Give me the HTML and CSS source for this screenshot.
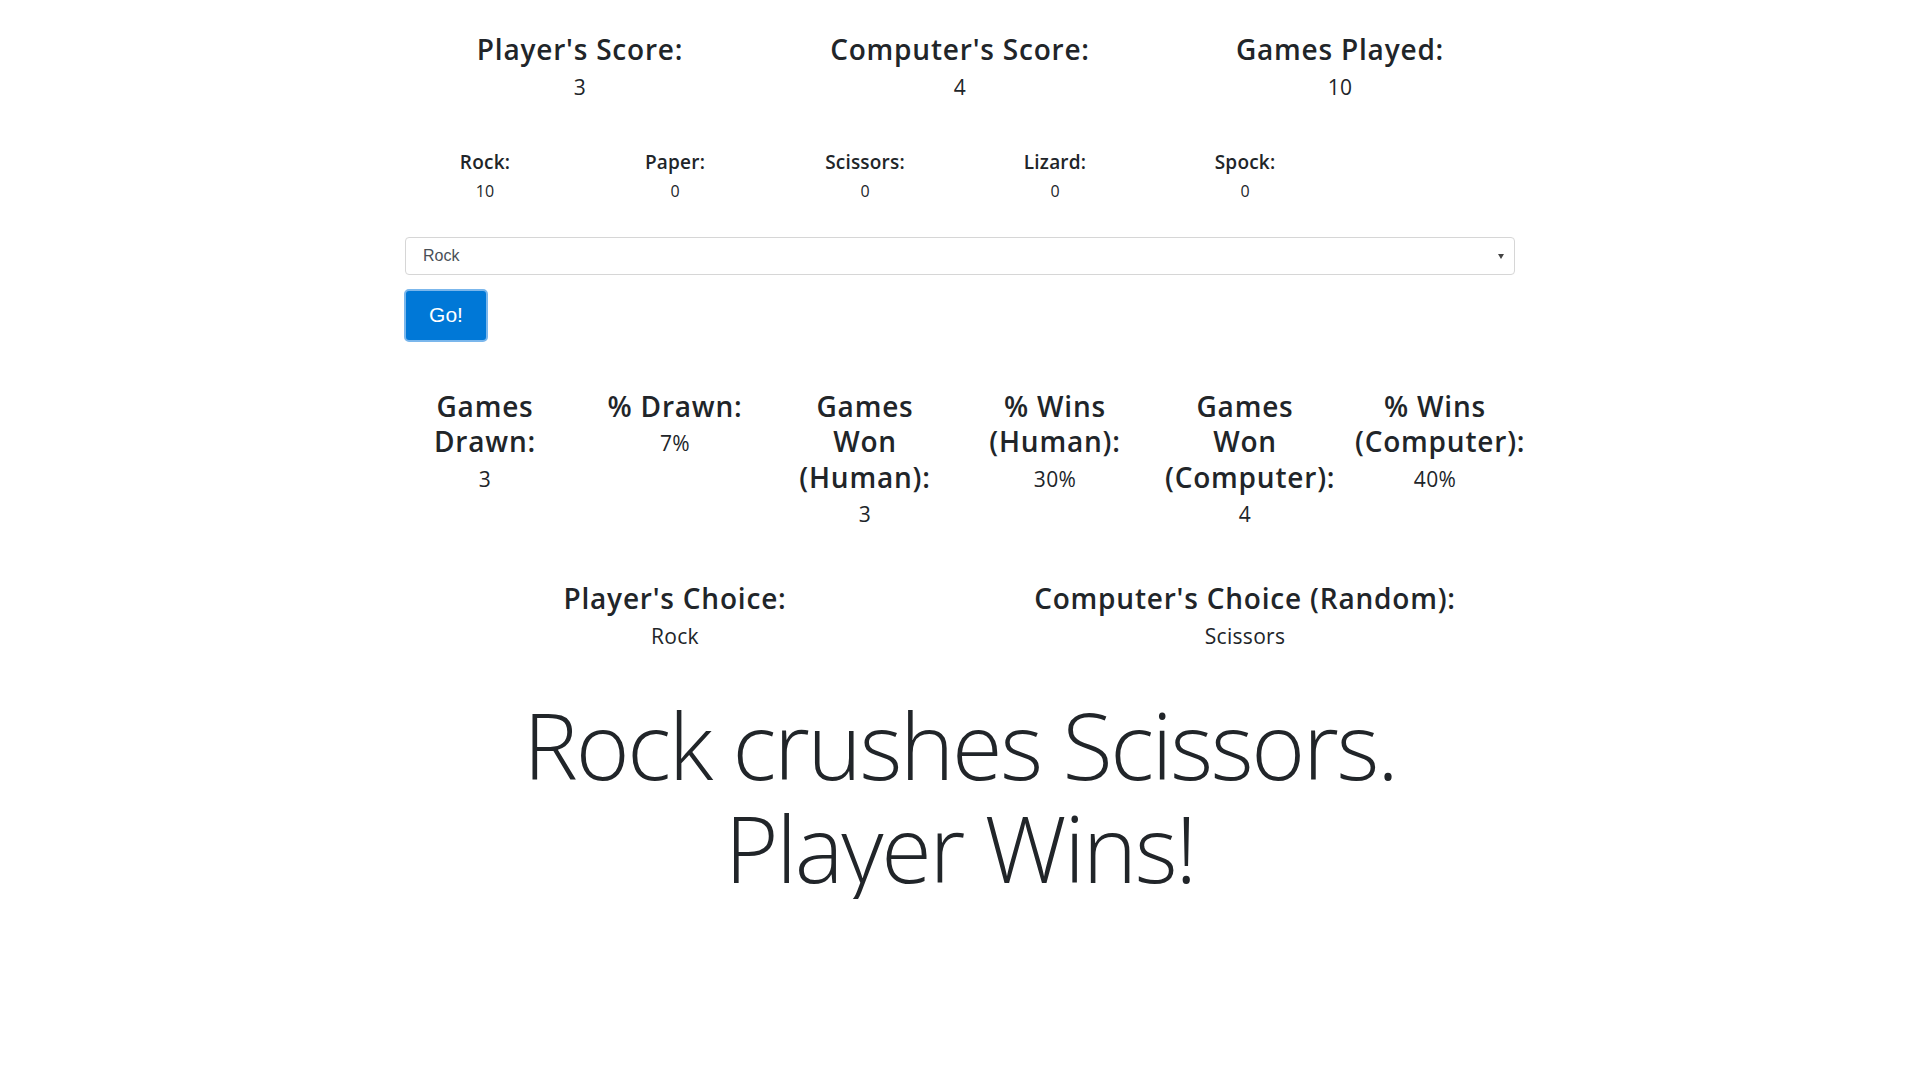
FILE: index.html
```html
<!DOCTYPE html>
<html lang="en">
<head>
<meta charset="utf-8">
<title>Rock Paper Scissors Lizard Spock</title>
<link rel="stylesheet" href="styles.css">
</head>
<body>
<div class="container">
  <div class="row scores">
    <div class="col col-4">
      <h3 class="head">Player's Score:</h3>
      <div class="value">3</div>
    </div>
    <div class="col col-4">
      <h3 class="head">Computer's Score:</h3>
      <div class="value">4</div>
    </div>
    <div class="col col-4">
      <h3 class="head">Games Played:</h3>
      <div class="value">10</div>
    </div>
  </div>

  <div class="row counts">
    <div class="col col-2">
      <h5 class="subhead">Rock:</h5>
      <div class="small-value">10</div>
    </div>
    <div class="col col-2">
      <h5 class="subhead">Paper:</h5>
      <div class="small-value">0</div>
    </div>
    <div class="col col-2">
      <h5 class="subhead">Scissors:</h5>
      <div class="small-value">0</div>
    </div>
    <div class="col col-2">
      <h5 class="subhead">Lizard:</h5>
      <div class="small-value">0</div>
    </div>
    <div class="col col-2">
      <h5 class="subhead">Spock:</h5>
      <div class="small-value">0</div>
    </div>
  </div>

  <div class="select-wrap">
    <select class="form-control">
      <option selected>Rock</option>
      <option>Paper</option>
      <option>Scissors</option>
      <option>Lizard</option>
      <option>Spock</option>
    </select>
  </div>
  <button class="btn-go" type="button">Go!</button>

  <div class="row stats">
    <div class="col col-2">
      <h3 class="head">Games Drawn:</h3>
      <div class="value">3</div>
    </div>
    <div class="col col-2">
      <h3 class="head">% Drawn:</h3>
      <div class="value">7%</div>
    </div>
    <div class="col col-2">
      <h3 class="head">Games Won (Human):</h3>
      <div class="value">3</div>
    </div>
    <div class="col col-2">
      <h3 class="head">% Wins (Human):</h3>
      <div class="value">30%</div>
    </div>
    <div class="col col-2">
      <h3 class="head">Games Won (Computer):</h3>
      <div class="value">4</div>
    </div>
    <div class="col col-2">
      <h3 class="head">% Wins (Computer):</h3>
      <div class="value">40%</div>
    </div>
  </div>

  <div class="row choices">
    <div class="col col-6">
      <h3 class="head">Player's Choice:</h3>
      <div class="value">Rock</div>
    </div>
    <div class="col col-6">
      <h3 class="head">Computer's Choice (Random):</h3>
      <div class="value">Scissors</div>
    </div>
  </div>

  <h1 class="result">Rock crushes Scissors.<br>Player Wins!</h1>
</div>
</body>
</html>
```

FILE: styles.css
```css
* {
  box-sizing: border-box;
}

html, body {
  margin: 0;
  padding: 0;
  background: #ffffff;
}

body {
  font-family: "Open Sans", "Noto Sans", sans-serif;
  color: #212529;
}

.container {
  width: 1140px;
  margin: 0 auto;
  padding: 32px 15px 0;
}

.row {
  display: flex;
  margin: 0 -15px;
}

.col {
  padding: 0 15px;
  text-align: center;
}

.col-2 { flex: 0 0 190px; width: 190px; }
.col-4 { flex: 0 0 380px; width: 380px; }
.col-6 { flex: 0 0 570px; width: 570px; }

.head {
  margin: 0 0 4px;
  font-size: 28px;
  font-weight: 600;
  line-height: 35.5px;
  letter-spacing: 0.8px;
}

.value {
  font-size: 21px;
  line-height: 30px;
  letter-spacing: 0.3px;
}

.counts {
  margin-top: 48px;
}

.subhead {
  margin: 0 0 4px;
  font-size: 19px;
  font-weight: 600;
  line-height: 25px;
  letter-spacing: 0.2px;
}

.small-value {
  font-size: 16px;
  line-height: 24px;
}

.select-wrap {
  position: relative;
  margin-top: 34px;
}

.select-wrap::after {
  content: "";
  position: absolute;
  right: 11px;
  top: 17px;
  border-left: 3px solid transparent;
  border-right: 3px solid transparent;
  border-top: 5px solid #444;
  pointer-events: none;
}

.form-control {
  display: block;
  width: 100%;
  height: 38px;
  padding: 0 30px 0 17px;
  font-family: "Liberation Sans", Arial, sans-serif;
  font-size: 16px;
  color: #495057;
  background: #ffffff;
  border: 1px solid #d6d6d6;
  border-radius: 4px;
  appearance: none;
  -webkit-appearance: none;
  outline: none;
}

.btn-go {
  display: block;
  margin-top: 14px;
  margin-left: -1px;
  width: 84px;
  height: 53px;
  padding: 0;
  font-family: "Liberation Sans", Arial, sans-serif;
  font-size: 21px;
  color: #ffffff;
  background: #0078d7;
  border: 2px solid #7bb7ec;
  border-radius: 5px;
  cursor: pointer;
}

.stats {
  margin-top: 47px;
}

.choices {
  margin-top: 52px;
}

.result {
  margin: 42px 0 0;
  text-align: center;
  font-size: 92px;
  font-weight: 300;
  line-height: 103px;
  letter-spacing: -0.025em;
  color: #212529;
}
```
